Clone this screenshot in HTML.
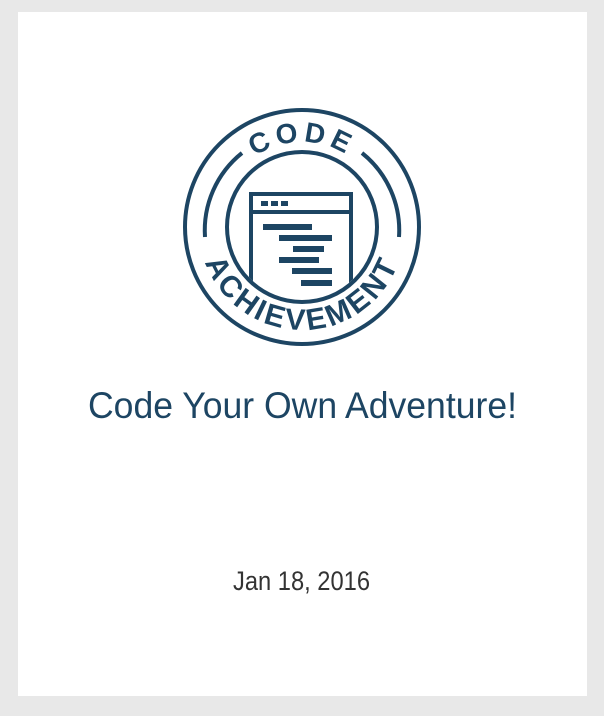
<!DOCTYPE html>
<html><head><style>
html,body{margin:0;padding:0;background:#e8e8e8;width:604px;height:716px;overflow:hidden}
</style></head><body>
<svg width="604" height="716" viewBox="0 0 604 716" xmlns="http://www.w3.org/2000/svg" style="display:block">
<rect x="0" y="0" width="604" height="716" fill="#e8e8e8"/>
<rect x="18" y="12" width="569" height="684" fill="#fff"/>
<g fill="none" stroke="#1d4563" stroke-width="4">
<circle cx="302" cy="227" r="117"/>
<circle cx="302" cy="227" r="75"/>
<path d="M242 153 A99 99 0 0 0 205 237"/>
<path d="M362 153 A99 99 0 0 1 399 237"/>
</g>
<defs>
<clipPath id="ic"><circle cx="302" cy="227" r="73"/></clipPath>
<path id="top" d="M217 227 A85 85 0 0 1 387 227"/>
<path id="bot" d="M199 227 A103 103 0 0 0 405 227"/>
</defs>
<g clip-path="url(#ic)">
<path d="M251 310 V194 H351 V310" fill="none" stroke="#1d4563" stroke-width="4"/>
<rect x="251" y="210" width="100" height="4" fill="#1d4563"/>
</g>
<g fill="#1d4563">
<rect x="261" y="201" width="7" height="5"/><rect x="271" y="201" width="7" height="5"/><rect x="281" y="201" width="7" height="5"/>
<rect x="263" y="224" width="49" height="6"/>
<rect x="279" y="235" width="53" height="6"/>
<rect x="293" y="246" width="31" height="6"/>
<rect x="279" y="257" width="40" height="6"/>
<rect x="292" y="268" width="40" height="6"/>
<rect x="301" y="280" width="31" height="6"/>
</g>
<g fill="#1d4563" font-family="Liberation Sans, sans-serif" font-weight="bold">
<text font-size="28" letter-spacing="5"><textPath href="#top" startOffset="50%" text-anchor="middle">CODE</textPath></text>
<text font-size="30" letter-spacing="3"><textPath href="#bot" startOffset="50%" text-anchor="middle">ACHIEVEMENT</textPath></text>
</g>
<text x="88" y="418" textLength="429" lengthAdjust="spacingAndGlyphs" font-family="Liberation Sans, sans-serif" font-size="37" fill="#1d4563">Code Your Own Adventure!</text>
<text x="233" y="590" textLength="137" lengthAdjust="spacingAndGlyphs" font-family="Liberation Sans, sans-serif" font-size="27" fill="#333">Jan 18, 2016</text>
</svg>
</body></html>
